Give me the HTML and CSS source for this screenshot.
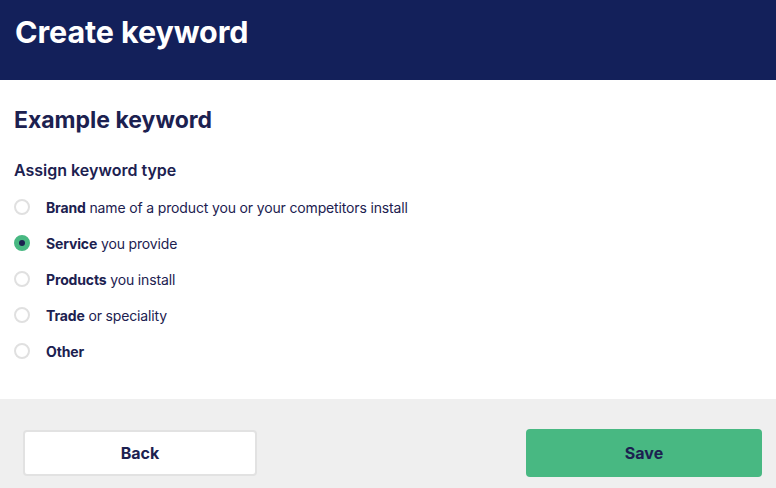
FILE: index.html
```html
<!DOCTYPE html>
<html>
<head>
<meta charset="utf-8">
<link rel="stylesheet" href="styles.css">
</head>
<body>
<div class="page">
  <header class="header">
    <h1 class="title">Create keyword</h1>
  </header>
  <main class="content">
    <h2 class="keyword">Example keyword</h2>
    <h3 class="label">Assign keyword type</h3>
    <ul class="options">
      <li class="option"><span class="radio"></span><span class="text"><b>Brand</b> name of a product you or your competitors install</span></li>
      <li class="option"><span class="radio checked"></span><span class="text"><b>Service</b> you provide</span></li>
      <li class="option"><span class="radio"></span><span class="text"><b>Products</b> you install</span></li>
      <li class="option"><span class="radio"></span><span class="text"><b>Trade</b> or speciality</span></li>
      <li class="option"><span class="radio"></span><span class="text"><b>Other</b></span></li>
    </ul>
  </main>
  <footer class="footer">
    <button class="btn btn-back">Back</button>
    <button class="btn btn-save">Save</button>
  </footer>
</div>
</body>
</html>
```
FILE: styles.css
```css
* { box-sizing: border-box; }
html, body { margin: 0; padding: 0; }
body {
  font-family: Inter, "Noto Sans", sans-serif;
  color: #1c2150;
  background: #fff;
  width: 776px;
  height: 488px;
  overflow: hidden;
}
.page { display: flex; flex-direction: column; height: 488px; }
.header {
  background: #13205a;
  height: 80px;
  padding: 12px 15px 0;
}
.title {
  margin: 0;
  color: #fff;
  font-size: 30.5px;
  font-weight: 700;
  line-height: 40px;
  letter-spacing: -0.1px;
}
.content {
  flex: 1;
  padding: 26px 14px 0;
}
.keyword {
  margin: 0;
  font-size: 23px;
  font-weight: 700;
  line-height: 28px;
}
.label {
  margin: 25px 0 0;
  font-size: 16px;
  font-weight: 600;
  line-height: 22px;
}
.options {
  list-style: none;
  margin: 16px 0 0;
  padding: 0;
  display: flex;
  flex-direction: column;
  gap: 16px;
}
.option {
  display: flex;
  align-items: center;
  gap: 16px;
  height: 20px;
  font-size: 14px;
  letter-spacing: -0.15px;
}
.option b { font-weight: 700; }
.radio {
  width: 16px;
  height: 16px;
  border-radius: 50%;
  border: 2px solid #e0e0e0;
  background: #fff;
  display: flex;
  align-items: center;
  justify-content: center;
  flex: none;
}
.radio.checked {
  background: #48b882;
  border-color: #48b882;
}
.radio.checked::after {
  content: "";
  width: 6px;
  height: 6px;
  border-radius: 50%;
  background: #1c2150;
}
.footer {
  background: #efefef;
  height: 89px;
  display: flex;
  justify-content: space-between;
  align-items: flex-start;
  padding: 30px 14px 0 23px;
}
.btn {
  font-family: inherit;
  font-size: 16px;
  font-weight: 700;
  color: #1c2150;
  border-radius: 4px;
  cursor: pointer;
}
.btn-back {
  width: 234px;
  height: 46px;
  background: #fff;
  border: 2px solid #e2e2e2;
  margin-top: 1px;
}
.btn-save {
  width: 236px;
  height: 48px;
  background: #48b882;
  border: none;
}
```
